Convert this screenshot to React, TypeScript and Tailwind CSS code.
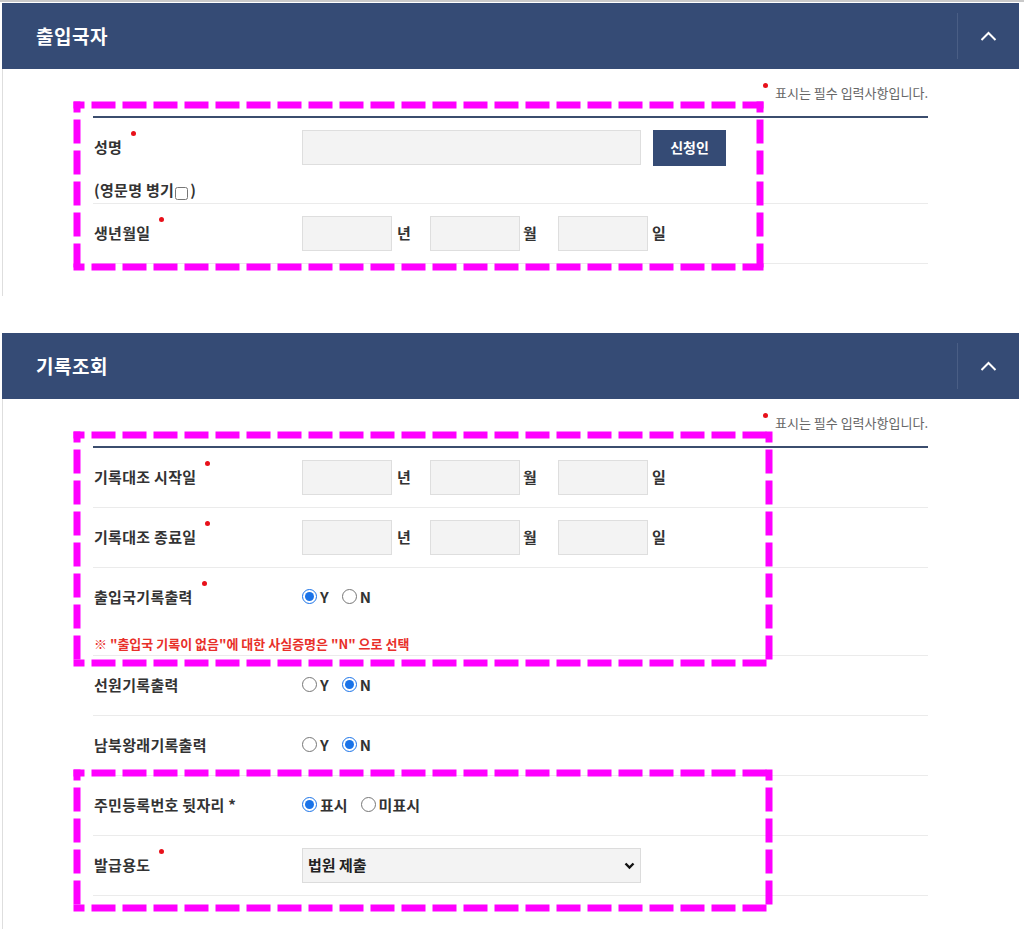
import React from "react";

const Dot = () => (
  <span className="inline-block w-[5px] h-[5px] rounded-full bg-[#e8101a] ml-[9px] self-start mt-[1px]" />
);

const Header = ({ title }: { title: string }) => (
  <div className="h-[66px] bg-[#354b75] flex items-center justify-between">
    <div className="pl-[34px] text-[19px] font-bold text-white tracking-[0.5px]">{title}</div>
    <div className="flex items-center h-full">
      <div className="w-px h-[46px] bg-[#4a5e85]" />
      <div className="w-[61px] flex items-center justify-center">
        <svg width="17" height="11" viewBox="0 0 17 11">
          <polyline points="1.5,9 8.5,2 15.5,9" fill="none" stroke="white" strokeWidth="2" />
        </svg>
      </div>
    </div>
  </div>
);

const Note = () => (
  <div className="h-[20px] flex justify-end items-center mb-[13px]">
    <span className="w-[5px] h-[5px] rounded-full bg-[#e8101a] self-start mt-[0px] mr-[7px]" />
    <span className="text-[13px] text-[#666] leading-[20px]">표시는 필수 입력사항입니다.</span>
  </div>
);

const Row = ({
  label,
  required,
  children,
  below,
}: {
  label: React.ReactNode;
  required?: boolean;
  children?: React.ReactNode;
  below?: React.ReactNode;
}) => (
  <div className={"border-b border-[#ebebeb] pt-[12px] " + (below ? "" : "pb-[12px]")}>
    <div className="flex">
      <div className="w-[209px] pl-[1px] h-[35px] flex items-center text-[15px] font-bold text-[#333] tracking-[0.3px]">
        <span>{label}</span>
        {required && <Dot />}
      </div>
      <div className="flex-1 h-[35px] flex items-center">{children}</div>
    </div>
    {below}
  </div>
);

const DateInputs = () => (
  <div className="flex items-center text-[15px] font-bold text-[#333]">
    <input className="w-[90px] h-[35px] bg-[#f3f3f3] border border-[#dedede]" />
    <span className="ml-[5px] w-[15px]">년</span>
    <input className="ml-[18px] w-[90px] h-[35px] bg-[#f3f3f3] border border-[#dedede]" />
    <span className="ml-[3px] w-[15px]">월</span>
    <input className="ml-[20px] w-[90px] h-[35px] bg-[#f3f3f3] border border-[#dedede]" />
    <span className="ml-[4px] w-[15px]">일</span>
  </div>
);

const Radio = ({ name, label, checked, gap }: { name: string; label: string; checked?: boolean; gap: string }) => (
  <label className={"flex items-center " + gap}>
    <input
      type="radio"
      name={name}
      defaultChecked={checked}
      className="m-0 w-[15px] h-[15px] accent-[#1a73e8]"
    />
    <span className="ml-[3px] text-[15px] font-bold text-[#333] leading-none">{label}</span>
  </label>
);

const YN = ({ name, y }: { name: string; y: boolean }) => (
  <div className="flex items-center -mt-[3px]">
    <Radio name={name} label="Y" checked={y} gap="mr-[13px]" />
    <Radio name={name} label="N" checked={!y} gap="" />
  </div>
);

const DashLine = ({ x1, y1, x2, y2 }: { x1: number; y1: number; x2: number; y2: number }) => (
  <line
    x1={x1}
    y1={y1}
    x2={x2}
    y2={y2}
    stroke="#ff00ff"
    strokeWidth="7"
    strokeDasharray="24 7"
    strokeDashoffset="13"
  />
);

const DashBox = ({ l, t, r, b }: { l: number; t: number; r: number; b: number }) => (
  <g>
    <DashLine x1={l - 3.5} y1={t} x2={r + 3.5} y2={t} />
    <DashLine x1={l} y1={t - 3.5} x2={l} y2={b + 3.5} />
    <DashLine x1={r} y1={t - 3.5} x2={r} y2={b + 3.5} />
    <DashLine x1={l - 3.5} y1={b} x2={r + 3.5} y2={b} />
  </g>
);

export default function App() {
  return (
    <div className="relative w-[1024px] h-[929px] bg-white overflow-hidden font-['Noto_Sans_CJK_KR','Noto_Sans',sans-serif]">
      <div className="h-[2px] bg-[#c9c9c9]" />
      <div className="h-px" />

      <section className="ml-[2px] w-[1017px]">
        <Header title="출입국자" />
        <div className="border-l border-[#dedede] pl-[90px] pt-[14px] pb-[32px]">
          <div className="w-[835px]">
            <Note />
            <div className="h-[2px] bg-[#3b4d6e]" />
            <Row
              label="성명"
              required
              below={
                <div className="mt-[15px] mb-[3px] pl-[1px] h-[20px] flex items-center text-[15px] font-bold text-[#333] tracking-[0.3px]">
                  <span>(영문명 병기</span>
                  <input type="checkbox" className="m-0 ml-[1px] mt-[6px] w-[13px] h-[13px]" />
                  <span className="ml-[2px]">)</span>
                </div>
              }
            >
              <input className="w-[339px] h-[35px] bg-[#f3f3f3] border border-[#dedede]" />
              <button className="ml-[12px] w-[73px] h-[36px] bg-[#354b75] text-white text-[14px] font-bold">
                신청인
              </button>
            </Row>
            <Row label="생년월일" required>
              <DateInputs />
            </Row>
          </div>
        </div>
      </section>

      <div className="h-[37px]" />

      <section className="ml-[2px] w-[1017px]">
        <Header title="기록조회" />
        <div className="border-l border-[#dedede] pl-[90px] pt-[14px] h-[530px]">
          <div className="w-[835px]">
            <Note />
            <div className="h-[2px] bg-[#3b4d6e]" />
            <Row label="기록대조 시작일" required>
              <DateInputs />
            </Row>
            <Row label="기록대조 종료일" required>
              <DateInputs />
            </Row>
            <Row
              label="출입국기록출력"
              required
              below={
                <div className="mt-[21px] mb-[3px] pl-[1px] h-[16px] flex items-center text-[13px] font-bold text-[#e8302a]">
                  ※ "출입국 기록이 없음"에 대한 사실증명은 "N" 으로 선택
                </div>
              }
            >
              <YN name="g1" y={true} />
            </Row>
            <Row label="선원기록출력">
              <YN name="g2" y={false} />
            </Row>
            <Row label="남북왕래기록출력">
              <YN name="g3" y={false} />
            </Row>
            <Row label="주민등록번호 뒷자리 *">
              <div className="flex items-center -mt-[3px]">
                <Radio name="g4" label="표시" checked gap="mr-[13px]" />
                <Radio name="g4" label="미표시" gap="" />
              </div>
            </Row>
            <Row label="발급용도" required>
              <div className="relative w-[339px] h-[35px]">
                <select className="appearance-none w-full h-full bg-[#f3f3f3] border border-[#dcdcdc] pl-[5px] text-[15px] font-semibold text-[#222] outline-none">
                  <option>법원 제출</option>
                </select>
                <svg
                  className="absolute right-[6px] top-[14px] pointer-events-none"
                  width="11"
                  height="8"
                  viewBox="0 0 11 8"
                >
                  <polyline points="1.5,1.5 5.5,5.5 9.5,1.5" fill="none" stroke="#111" strokeWidth="2.4" />
                </svg>
              </div>
            </Row>
          </div>
        </div>
      </section>

      <svg className="absolute left-0 top-0 pointer-events-none" width="1024" height="929">
        <DashBox l={77} t={105} r={760} b={267} />
        <DashBox l={77} t={435} r={769} b={663} />
        <DashBox l={77} t={773} r={769} b={908} />
      </svg>
    </div>
  );
}
